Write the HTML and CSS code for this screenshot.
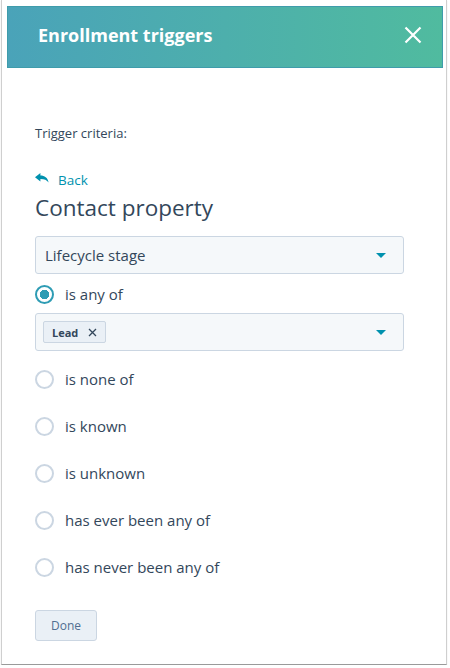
FILE: index.html
```html
<!DOCTYPE html>
<html>
<head>
<meta charset="utf-8">
<link rel="stylesheet" href="styles.css">
</head>
<body>
<div class="frame">
  <div class="header">
    <span class="title">Enrollment triggers</span>
    <svg class="close" width="18" height="18" viewBox="0 0 18 18"><path d="M1.5 1.5 L16.5 16.5 M16.5 1.5 L1.5 16.5" stroke="#fff" stroke-width="2.2" fill="none"/></svg>
  </div>
  <div class="content">
    <div class="label">Trigger criteria:</div>
    <div class="back">
      <svg width="14" height="11" viewBox="0 0 14 11"><path d="M0 4.2 L5.4 0 L5.4 2.6 C9.6 2.6 12.6 4.6 13.6 9.6 C11.8 6.9 9.4 6 5.4 6 L5.4 8.6 Z" fill="#0091ae"/></svg>
      <span>Back</span>
    </div>
    <h1 class="heading">Contact property</h1>
    <div class="select">
      <span>Lifecycle stage</span>
      <span class="caret"></span>
    </div>
    <div class="radio first checked"><span class="dot"></span><span>is any of</span></div>
    <div class="select multi">
      <span class="tag"><b>Lead</b><svg width="9" height="9" viewBox="0 0 9 9"><path d="M1 1 L8 8 M8 1 L1 8" stroke="#33475b" stroke-width="1.3"/></svg></span>
      <span class="caret"></span>
    </div>
    <div class="radio gap1"><span class="dot"></span><span>is none of</span></div>
    <div class="radio"><span class="dot"></span><span>is known</span></div>
    <div class="radio"><span class="dot"></span><span>is unknown</span></div>
    <div class="radio"><span class="dot"></span><span>has ever been any of</span></div>
    <div class="radio"><span class="dot"></span><span>has never been any of</span></div>
    <button class="done">Done</button>
  </div>
</div>
</body>
</html>
```

FILE: styles.css
```css
html, body {
  margin: 0;
  padding: 0;
  background: #fff;
}
body {
  font-family: "Open Sans", "Noto Sans", "Liberation Sans", sans-serif;
  color: #33475b;
}
.frame {
  margin-left: 1px;
  width: 446px;
  height: 665px;
  box-sizing: border-box;
  border-left: 1px solid #cfcfcf;
  border-right: 1px solid #cfcfcf;
  border-bottom: 1px solid #9a9a9a;
  box-shadow: 0 1px 1px rgba(0,0,0,0.15);
  padding-top: 6px;
}
.header {
  margin: 0 3px 0 5px;
  height: 62px;
  box-sizing: border-box;
  border: 1px solid #3f9cab;
  background: linear-gradient(to right, #4aa3b9, #50bb9f);
  display: flex;
  align-items: center;
  justify-content: space-between;
  padding: 0 20px 0 30px;
}
.title {
  color: #fff;
  font-weight: 700;
  font-size: 18px;
  margin-top: -5px;
}
.close {
  margin-top: -5px;
}
.content {
  padding: 56px 0 0 33px;
}
.label {
  font-size: 13px;
  line-height: 18px;
  font-weight: 500;
}
.back {
  margin-top: 29px;
  height: 18px;
  display: flex;
  align-items: center;
  gap: 9px;
  color: #0091ae;
  font-size: 13.5px;
}
.back svg {
  margin-top: -3px;
}
.heading {
  margin: 5px 0 0 0;
  font-size: 22.5px;
  line-height: 28px;
  font-weight: 400;
}
.select {
  margin-top: 14px;
  width: 369px;
  height: 38px;
  box-sizing: border-box;
  background: #f5f8fa;
  border: 1px solid #cbd6e2;
  border-radius: 3px;
  display: flex;
  align-items: center;
  justify-content: space-between;
  padding: 0 17px 0 9px;
  font-size: 15px;
}
.caret {
  width: 0;
  height: 0;
  border-left: 5px solid transparent;
  border-right: 5px solid transparent;
  border-top: 5px solid #0091ae;
}
.select.multi {
  margin-top: 9px;
  padding-left: 7px;
}
.tag {
  height: 22px;
  width: 63px;
  box-sizing: border-box;
  background: #eaf0f6;
  border: 1px solid #cbd6e2;
  border-radius: 2px;
  display: flex;
  align-items: center;
  padding-left: 8px;
  gap: 10px;
  font-size: 11px;
}
.radio {
  margin-top: 27px;
  height: 20px;
  display: flex;
  align-items: center;
  gap: 11px;
  font-size: 15px;
}
.radio.first {
  margin-top: 10px;
}
.radio.gap1 {
  margin-top: 18px;
}
.dot {
  width: 19px;
  height: 19px;
  box-sizing: border-box;
  border: 2px solid #cbd6e2;
  border-radius: 50%;
  flex: none;
}
.radio.checked .dot {
  border-color: #2e9cb4;
  background: radial-gradient(circle, #2e9cb4 0 4.5px, #fff 5px);
}
.done {
  margin-top: 33px;
  width: 62px;
  height: 31px;
  box-sizing: border-box;
  background: #eaf0f6;
  border: 1px solid #cbd6e2;
  border-radius: 3px;
  color: #506e91;
  font-family: inherit;
  font-size: 12px;
  padding: 0;
}
```
